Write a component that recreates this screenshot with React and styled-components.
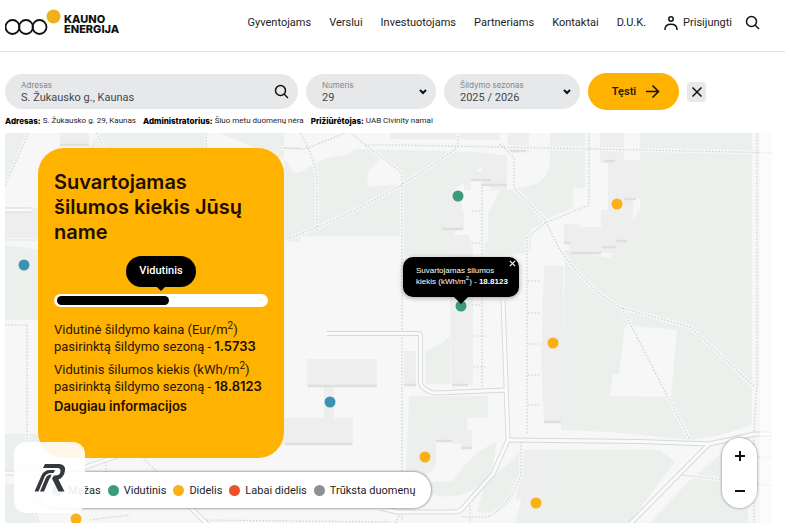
import React from "react";
import styled, { createGlobalStyle, css } from "styled-components";

const GlobalStyle = createGlobalStyle`
  *, *::before, *::after { box-sizing: border-box; }
  body { margin: 0; background: #fff; color: #1c1c1c; font-family: Roboto, "Noto Sans", sans-serif; }
  button, input, select { font: inherit; color: inherit; margin: 0; padding: 0; border: 0; background: none; }
  button { cursor: pointer; }
  a { color: inherit; text-decoration: none; }
`;

const Header = styled.header`
  display: flex;
  align-items: center;
  justify-content: space-between;
  height: 52px;
  padding: 0 25px 6px 5px;
  border-bottom: 1px solid #dfe0e2;
`;

const Brand = styled.a`
  display: flex;
  align-items: center;
  gap: 3px;
`;

const BrandMark = styled.svg`
  width: 56px;
  height: 28px;
`;

const BrandName = styled.span`
  display: flex;
  flex-direction: column;
  padding-top: 3px;
  font-family: Inter, sans-serif;
  font-size: 11px;
  font-weight: 800;
  line-height: 10px;
  color: #111;
`;

const Nav = styled.nav`
  display: flex;
  align-items: center;
  gap: 18px;
  font-size: 11px;
  line-height: 16px;
  white-space: nowrap;
`;

const Account = styled.div`
  display: flex;
  align-items: center;
  gap: 13px;
`;

const Login = styled.a`
  display: flex;
  align-items: center;
  gap: 5px;
`;

const IconButton = styled.button`
  display: grid;
  place-items: center;
`;

const Icon = styled.svg`
  display: block;
  flex: none;
  width: ${(p) => p.$size}px;
  height: ${(p) => p.$size}px;
  fill: none;
  stroke: #111;
  stroke-width: ${(p) => p.$stroke || 1.5};
`;

const Filters = styled.form`
  display: grid;
  grid-template-columns: minmax(0, 1fr) 130px 136px 91px 19px;
  gap: 8px;
  align-items: center;
  padding: 21px 79px 0 5px;
`;

const Field = styled.div`
  display: flex;
  align-items: center;
  position: relative;
  height: 35px;
  padding: 0 9px 0 16px;
  border-radius: 18px;
  background: #e7e8ea;
`;

const FieldBody = styled.label`
  display: flex;
  flex-direction: column;
  flex: 1;
  min-width: 0;
`;

const Caption = styled.span`
  font-family: Inter, sans-serif;
  font-size: 8px;
  line-height: 10px;
  padding-top: 2px;
  color: #85878b;
`;

const valueStyle = css`
  width: 100%;
  height: 15px;
  font-size: 11px;
  line-height: 15px;
  color: #45474a;
  outline: 0;
`;

const TextInput = styled.input`
  && { ${valueStyle} }
`;

const Select = styled.select`
  && { ${valueStyle} appearance: none; }
`;

const Submit = styled.button`
  && {
    display: flex;
    align-items: center;
    justify-content: center;
    gap: 9px;
    height: 37px;
    padding-left: 5px;
    border-radius: 19px;
    background: #ffb300;
    font-size: 11px;
    font-weight: 600;
    color: #2a1a00;
  }
`;

const Clear = styled(IconButton)`
  && { height: 20px; border-radius: 4px; background: #e7e8ea; }
`;

const Details = styled.dl`
  display: flex;
  flex-wrap: wrap;
  gap: 0 7px;
  margin: 0;
  padding: 5px 5px 6px;
  font-size: 8px;
  line-height: 12px;
`;

const Detail = styled.div`
  display: flex;
  gap: 2px;
  dt { font-family: Inter, sans-serif; font-weight: 800; color: #000; }
  dd { margin: 0; }
`;

const MapArea = styled.main`
  display: grid;
  position: relative;
  height: calc(100vh - 137px);
  min-height: 390px;
  margin: 0 13px 4px 5px;
  overflow: hidden;
  background: #f6f7f6;
`;

const MapDrawing = styled.svg`
  grid-area: 1 / 1;
  width: 100%;
  height: 100%;
  min-height: 0;
`;

const Overlay = styled.div`
  grid-area: 1 / 1;
  display: flex;
  align-items: flex-end;
  justify-content: space-between;
  z-index: 1;
  padding: 15px 15px 15px 33px;
  pointer-events: none;
  > * { pointer-events: auto; }
`;

const Side = styled.div`
  display: flex;
  flex-direction: column;
  justify-content: space-between;
  align-self: stretch;
  align-items: flex-start;
`;

const Card = styled.section`
  width: 246px;
  min-height: 310px;
  padding: 22px 16px;
  border-radius: 26px;
  background: #ffb300;
  color: #2a1600;
  font-family: Inter, "Noto Sans", sans-serif;
`;

const Title = styled.h1`
  max-width: 200px;
  margin: 0;
  font-size: 20px;
  font-weight: 600;
  line-height: 25px;
  color: #1d0d00;
`;

const Level = styled.div`
  display: flex;
  flex-direction: column;
  align-items: center;
  margin-top: 11px;
`;

const LevelTag = styled.output`
  position: relative;
  padding: 7px 13px 8px;
  border-radius: 16px;
  background: #000;
  color: #fff;
  font-family: Roboto, sans-serif;
  font-size: 11px;
  font-weight: 500;
  line-height: 16px;
  &::after {
    content: "";
    position: absolute;
    top: 100%;
    left: 50%;
    margin-left: -4px;
    border: 4px solid transparent;
    border-top-color: #000;
    border-bottom: 0;
  }
`;

const Track = styled.div`
  align-self: stretch;
  height: 13px;
  margin-top: 7px;
  padding: 2px 3px;
  border-radius: 7px;
  background: #fff;
`;

const Fill = styled.div`
  width: ${(p) => p.$value}%;
  height: 9px;
  border-radius: 5px;
  background: #000;
`;

const Reading = styled.p`
  margin: 0 -8px 0 0;
  padding-top: ${(p) => (p.$first ? 14 : 6)}px;
  font-family: Roboto, sans-serif;
  font-size: 13px;
  line-height: 17px;
  sup { font-size: 10px; line-height: 0; vertical-align: 5px; }
  strong { font-family: Inter, sans-serif; font-weight: 600; line-height: 0; color: #1d0d00; }
`;

const More = styled.a`
  display: block;
  padding-top: 3px;
  font-size: 13px;
  font-weight: 600;
  line-height: 17px;
  color: #1d0d00;
`;

const Legend = styled.ul`
  display: flex;
  align-items: center;
  gap: 7px;
  height: 36px;
  margin: 0;
  padding: 0 16px 0 14px;
  list-style: none;
  border-radius: 18px;
  background: #fff;
  box-shadow: 0 0 2px 1px rgba(90, 95, 100, 0.5);
  font-size: 11px;
  white-space: nowrap;
`;

const LegendItem = styled.li`
  display: flex;
  align-items: center;
  gap: 5px;
  &::before {
    content: "";
    width: 11px;
    height: 11px;
    border-radius: 50%;
    background: ${(p) => p.$color};
  }
`;

const Zoom = styled.div`
  display: flex;
  flex-direction: column;
  width: 35px;
  height: 70px;
  border-radius: 18px;
  background: #fff;
  box-shadow: 0 0 2px 1px rgba(90, 95, 100, 0.4);
  button { flex: 1; }
`;

const Pin = styled.button`
  && {
    position: absolute;
    left: ${(p) => (p.$x / 767) * 100}%;
    top: ${(p) => (p.$y / 390) * 100}%;
    width: 11px;
    height: 11px;
    border-radius: 50%;
    background: ${(p) => p.$color};
    transform: translate(-50%, -50%);
  }
`;

const Popup = styled.div`
  position: absolute;
  left: ${(p) => (p.$x / 767) * 100}%;
  top: ${(p) => (p.$y / 390) * 100}%;
  width: 116px;
  padding: 8px 12px 10px 13px;
  border-radius: 10px;
  background: #000;
  color: #fff;
  font-family: "Liberation Sans", Arial, sans-serif;
  font-size: 8px;
  line-height: 11px;
  white-space: nowrap;
  transform: translate(-50%, -100%);
  box-shadow: 0 1px 5px rgba(0, 0, 0, 0.35);
  p { margin: 0; }
  sup { font-size: 6px; line-height: 0; }
  &::after {
    content: "";
    position: absolute;
    top: 100%;
    left: 50%;
    margin-left: -7px;
    border: 7px solid transparent;
    border-top-color: #000;
    border-bottom: 0;
  }
`;

const PopupClose = styled(IconButton)`
  && { position: absolute; top: 3px; right: 3px; }
`;

const Watermark = styled.div`
  display: grid;
  place-items: center;
  position: absolute;
  z-index: 2;
  left: 9px;
  bottom: 10px;
  width: 71px;
  height: 71px;
  border-radius: 12px;
  background: rgba(255, 255, 255, 0.91);
`;

const colors = {
  low: "#3b93b1",
  medium: "#3b9a78",
  high: "#fbb113",
  veryHigh: "#ee5127",
  none: "#8d8f91",
};

const pins = [
  { x: 19, y: 132, level: "low" },
  { x: 325, y: 269, level: "low" },
  { x: 453, y: 63, level: "medium" },
  { x: 456, y: 173, level: "medium" },
  { x: 612, y: 71, level: "high" },
  { x: 548, y: 210, level: "high" },
  { x: 420, y: 324, level: "high" },
  { x: 531, y: 370, level: "high" },
  { x: 71, y: 386, level: "high" },
];

const legend = [
  ["low", "Mažas"],
  ["medium", "Vidutinis"],
  ["high", "Didelis"],
  ["veryHigh", "Labai didelis"],
  ["none", "Trūksta duomenų"],
];

const navItems = ["Gyventojams", "Verslui", "Investuotojams", "Partneriams", "Kontaktai", "D.U.K."];

const roads = [
  "M327 333.500H418Q420.500 333.500 420.500 336V381Q420.500 386 425 389L430 392Q433 393 437 393L507 390",
  "M503 300L508 440L493 474L462 509Q459 512 454 512H397L380 508",
  "M508 440L640 441.500L709 444L755 434H785",
  "M709 444L630 524",
  "M0 473H40",
  "M0 210H31M83 468L120 455M190 507L208 525",
];

const paths = [
  "M280 148L305 149L345 133M299 130Q313 155 317 175V230",
  "M348 130L365 145H400L785 153M365 145L402 173V520",
  "M290 238L330 222Q400 190 458 147V133",
  "M589 133V205L545 223L527 238V435M500 144L514 158V188L545 220L560 250Q590 292 622 308L690 327L755 387",
  "M622 308L690 440",
  "M757 133V385L754 430V525",
  "M482 187V387M472 211H482M472 243H482M472 305H482M474 336H486M474 367H486",
  "M528 281H541M528 313H541M528 344H541M528 375H541M528 405H541",
  "M521 442V475Q510 505 488 517H460M470 506V525M402 510L395 524",
  "M682 475L785 487M745 457H785",
  "M5 185L30 130M5 240H38M27 325V440M5 325H27M95 130L105 150M206 130V148",
  "M285 148H300M106 455V475M140 455L160 475M200 520L390 522M90 520L130 515M20 470L40 525",
];

function MapBackground() {
  return (
    <MapDrawing viewBox="5 133 767 390" preserveAspectRatio="xMidYMid slice" aria-hidden="true">
      <g fill="#ebf0ed">
        <path d="M5 133H30L5 188ZM5 208H38V238H5ZM5 245L38 250V320H5ZM5 434H45V470H5ZM5 484H38V523H5Z" />
        <path d="M100 133H206V160H80ZM220 133H284V240L300 243Q302 170 284 160Z" />
        <path d="M283 170Q299 176 307 168L318 162Q330 156 345 155L356 149L480 152L500 155L506 162V170L480 168L455 190V235L403 254V236H280Z" />
        <path d="M390 133H585V188H573V208L555 215L531 230V251H523L530 238L484 221V190L516 190L550 160V140L390 139Z" />
        <path d="M403 236H452V256H403ZM484 218H524L530 238L525 254H484Z" />
        <path d="M600 133H752V425L720 435L690 440L610 432L561 430L565 250L610 258L640 208V133Z" />
        <path d="M425 352L442 343L450 337V384H426ZM409 396H488V418H467V440L436 440L432 472H406Z" />
        <path d="M497 441Q480 449 466 464L452 481L428 482V494Q470 505 492 470ZM521 448Q514 460 485 484L477 512Q515 519 521 470Z" />
        <path d="M535 450H660L675 462L629 523H515ZM722 453L748 438V523H650L687 483Z" />
      </g>
      <g fill="#f6f7f6">
        <path d="M550 133V165Q545 182 533 185L520 188L516 150L500 143V133ZM382 158L403 172V184L367 187L368 171ZM625 325L677 330L671 397L610 396L613 374H619ZM484 191L500 190L488 214V240L482 248Z" />
      </g>
      <g fill="#eeeeef">
        <path d="M307 359H377V387H334V418H353V445H240V418H324V387H307ZM403 351H416V386H403Z" />
        <path d="M508 133H529V152H507ZM482 155H507V190H491V186H481V181H471V190H464V172H482ZM442 193H462V210H464V229H443V220H440V204H444ZM451 235H469Q475 250 473 270V385H451L450 300Z" />
        <path d="M600 133H624V160H640V199H633V240H622V253H569V244H564V224H580V227H601V210H608V163H600ZM544 266H563V422H544L541 360Z" />
        <path d="M444 423H467V430H472V449H461V444H452V441H436V467L420 480V458L412 452L436 438ZM520 450H551V500H516ZM60 133H89V145H60ZM20 215H38V240H5V218Z" />
      </g>
      <path d="M308 386H334M334 386H377M285 444H352M403 385H416M508 151H526M471 180H491M481 185H507M442 229H463M452 385H468M436 441H452M461 448H472M604 161H615M624 199H636M564 243H570M571 253H601M602 247H616M616 241H627M544 422H561M60 145H89" stroke="#dedfdf" strokeWidth="2.500" fill="none" />
      <g fill="none" strokeLinejoin="round">
        {paths.map((d) => <path key={d} d={d} stroke="#f5f7f6" strokeWidth="4" />)}
        {paths.map((d) => <path key={d} d={d} stroke="#ced1d1" strokeWidth="1.200" strokeDasharray="1.500 1.800" />)}
        {roads.map((d) => <path key={d} d={d} stroke="#d7d8d9" strokeWidth="5" />)}
        {roads.map((d) => <path key={d} d={d} stroke="#fafafa" strokeWidth="3.200" />)}
      </g>
      <path d="M760 133H772V523H760Z" fill="#fff" opacity="0.550" />
    </MapDrawing>
  );
}

const SearchIcon = () => (
  <Icon $size={15} viewBox="0 0 15 15" aria-hidden="true">
    <circle cx="6.500" cy="6.500" r="5" />
    <path d="M10 10L14 14" />
  </Icon>
);

const CrossIcon = ({ size, light }) => (
  <Icon $size={size} viewBox="0 0 12 12" aria-hidden="true">
    <path
      d="M1.500 1.500L10.500 10.500M10.500 1.500L1.500 10.500"
      stroke={light ? "#fff" : "#111"}
      strokeWidth={light ? 2 : 1.5}
    />
  </Icon>
);

const Chevron = () => (
  <Icon $size={8} $stroke={2} viewBox="0 0 8 8" aria-hidden="true">
    <path d="M1 2L4 5L7 2" />
  </Icon>
);

export default function App() {
  return (
    <>
      <GlobalStyle />
      <Header>
        <Brand href="#" aria-label="Kauno energija">
          <BrandMark viewBox="0 0 56 28" aria-hidden="true">
            <g fill="none" stroke="#111" strokeWidth="1.800">
              <circle cx="7.500" cy="18" r="7" />
              <circle cx="21" cy="18" r="7" />
              <circle cx="34.500" cy="18" r="7" />
            </g>
            <circle cx="48.500" cy="7.500" r="7" fill="#efb01d" />
          </BrandMark>
          <BrandName><span>KAUNO</span><span>ENERGIJA</span></BrandName>
        </Brand>
        <Nav>
          {navItems.map((item) => <a key={item} href="#">{item}</a>)}
          <Account>
            <Login href="#">
              <Icon $size={14} viewBox="0 0 14 14" aria-hidden="true">
                <circle cx="7" cy="3" r="2.200" />
                <path d="M1 14V13Q1.500 8.300 7 8.300T13 13V14" />
              </Icon>
              Prisijungti
            </Login>
            <IconButton type="button" aria-label="Paieška"><SearchIcon /></IconButton>
          </Account>
        </Nav>
      </Header>

      <Filters onSubmit={(e) => e.preventDefault()}>
        <Field>
          <FieldBody>
            <Caption>Adresas</Caption>
            <TextInput defaultValue="S. Žukausko g., Kaunas" />
          </FieldBody>
          <IconButton type="button" aria-label="Ieškoti adreso"><SearchIcon /></IconButton>
        </Field>
        <Field>
          <FieldBody>
            <Caption>Numeris</Caption>
            <Select defaultValue="29"><option>29</option></Select>
          </FieldBody>
          <Chevron />
        </Field>
        <Field>
          <FieldBody>
            <Caption>Šildymo sezonas</Caption>
            <Select defaultValue="2025 / 2026"><option>2025 / 2026</option></Select>
          </FieldBody>
          <Chevron />
        </Field>
        <Submit type="submit">
          Tęsti
          <Icon $size={15} viewBox="0 0 15 15" aria-hidden="true">
            <path d="M1 7.500H13.500M7.500 1.500L13.500 7.500L7.500 13.500" />
          </Icon>
        </Submit>
        <Clear type="reset" aria-label="Išvalyti"><CrossIcon size={12} /></Clear>
      </Filters>

      <Details>
        <Detail><dt>Adresas:</dt><dd>S. Žukausko g. 29, Kaunas</dd></Detail>
        <Detail><dt>Administratorius:</dt><dd>Šiuo metu duomenų nėra</dd></Detail>
        <Detail><dt>Prižiūrėtojas:</dt><dd>UAB Civinity namai</dd></Detail>
      </Details>

      <MapArea>
        <MapBackground />
        {pins.map((pin) => (
          <Pin key={`${pin.x}-${pin.y}`} type="button" aria-label="Pastatas" $x={pin.x} $y={pin.y} $color={colors[pin.level]} />
        ))}
        <Popup role="dialog" aria-label="Pastato duomenys" $x={456} $y={164}>
          <p>Suvartojamas šilumos<br />kiekis (kWh/m<sup>2</sup>) - <strong>18.8123</strong></p>
          <PopupClose type="button" aria-label="Uždaryti"><CrossIcon size={7} light /></PopupClose>
        </Popup>
        <Overlay>
          <Side>
            <Card>
              <Title>Suvartojamas šilumos kiekis Jūsų name</Title>
              <Level>
                <LevelTag>Vidutinis</LevelTag>
                <Track><Fill $value={54} /></Track>
              </Level>
              <Reading $first>
                Vidutinė šildymo kaina (Eur/m<sup>2</sup>)<br />
                pasirinktą šildymo sezoną - <strong>1.5733</strong>
              </Reading>
              <Reading>
                Vidutinis šilumos kiekis (kWh/m<sup>2</sup>)<br />
                pasirinktą šildymo sezoną - <strong>18.8123</strong>
              </Reading>
              <More href="#">Daugiau informacijos</More>
            </Card>
            <Legend>
              {legend.map(([level, label]) => (
                <LegendItem key={level} $color={colors[level]}>{label}</LegendItem>
              ))}
            </Legend>
          </Side>
          <Zoom>
            <IconButton type="button" aria-label="Priartinti">
              <Icon $size={12} $stroke={2} viewBox="0 0 12 12"><path d="M1 6H11M6 1V11" /></Icon>
            </IconButton>
            <IconButton type="button" aria-label="Atitolinti">
              <Icon $size={12} $stroke={2} viewBox="0 0 12 12"><path d="M1 6H11" /></Icon>
            </IconButton>
          </Zoom>
        </Overlay>
        <Watermark>
          <svg width="32" height="30" viewBox="0 0 32 30" aria-hidden="true">
            <g fill="#35393d">
              <path d="M11 1H25Q31.500 1 31 7.500Q30 14.500 24.500 16.500L30.500 28.500H24.500L18 15.500L20 12.500H22Q26.500 12 26.500 8Q26.500 5 23.500 5H9Z" />
              <path d="M0.500 28.500L7.500 12.500Q10 7 16 7H21L19.500 10H17Q12.500 10 10.500 14L4.500 28.500Z" />
              <path d="M6 28.500L11.500 15.500Q13 11.500 17.500 11.500L16.500 14.500Q15.500 15 14.500 18L10 28.500Z" />
            </g>
          </svg>
        </Watermark>
      </MapArea>
    </>
  );
}
